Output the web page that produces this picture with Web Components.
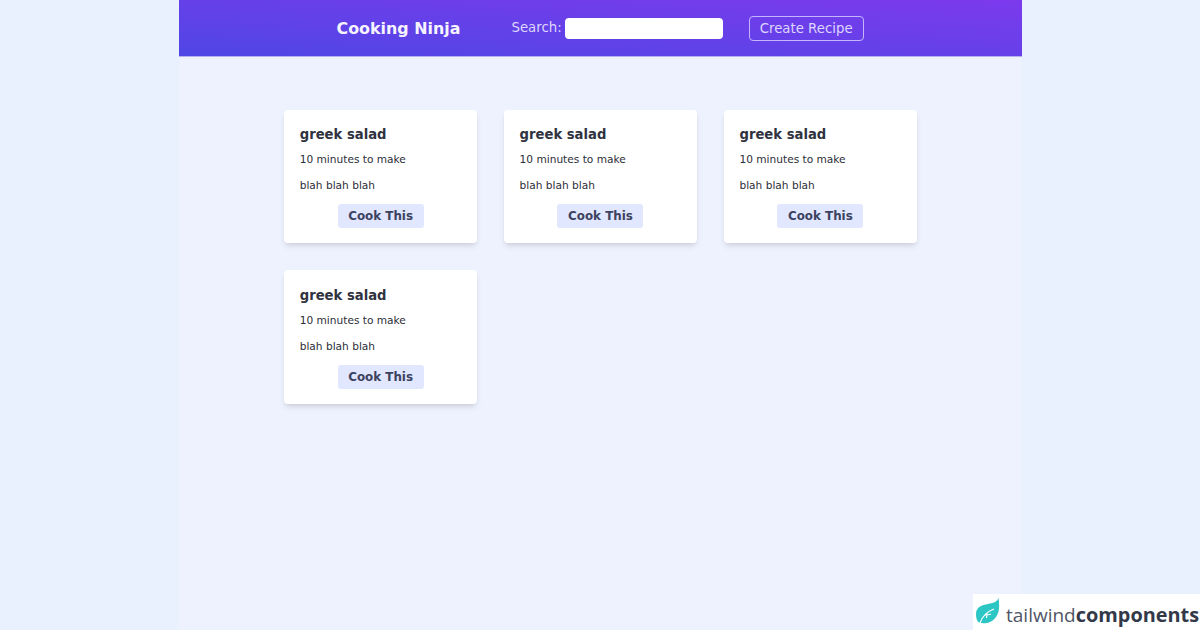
<!DOCTYPE html>
<html lang="en">
<head>
<meta charset="utf-8">
<title>Cooking Ninja</title>
<style>
  html, body { margin: 0; height: 100%; }
  body { background: #e8f1fd; font-family: "DejaVu Sans", sans-serif; overflow: hidden; }
</style>
</head>
<body>
<app-shell>
  <nav-bar slot="nav" brand="Cooking Ninja"></nav-bar>
  <recipe-card></recipe-card>
  <recipe-card></recipe-card>
  <recipe-card></recipe-card>
  <recipe-card></recipe-card>
</app-shell>
<tw-badge></tw-badge>
<script>
window.customElements.define('app-shell', class extends HTMLElement {
  constructor() {
    super()
    this.attachShadow({mode:"open"})
    this.shadowRoot.innerHTML = `
      <style>
        :host {
          display: block;
          width: 843px;
          height: 630px;
          margin: 0 auto;
          background: #eef2fe;
        }
        #grid {
          margin-left: 105.6px;
          padding-top: 52.7px;
          display: grid;
          grid-template-columns: repeat(3, 192.7px);
          column-gap: 27.2px;
          row-gap: 27.4px;
        }
      </style>
      <slot name="nav"></slot>
      <div id="grid"><slot></slot></div>
    `
  }
})

window.customElements.define('nav-bar', class extends HTMLElement {
  constructor() {
    super()
    this.attachShadow({mode:"open"})
    this.shadowRoot.innerHTML = `
      <style>
        :host {
          display: flex;
          align-items: center;
          height: 56px;
          padding-left: 158px;
          background: linear-gradient(to top right, #4f46e5, #7c3aed);
          border-bottom: 1px solid #b5aef0;
        }
        h1 { margin: 1px 51px 0 0; font-size: 15.9px; line-height: 24px; font-weight: 700; color: #f5f3ff; }
        label { color: #ddd6fe; font-size: 13.3px; display: flex; align-items: center; gap: 3px; margin-top: -2px; }
        input {
          width: 158px; height: 21px; box-sizing: border-box;
          border: 0; border-radius: 4px; background: #fff; padding: 0; margin-top: 3px;
        }
        button {
          margin-left: 26px; height: 25px; width: 115px; box-sizing: border-box;
          border: 1px solid #c4b5fd; border-radius: 4px; background: transparent;
          color: #ddd6fe; font: 13.3px "DejaVu Sans", sans-serif; padding: 0;
        }
      </style>
      <h1></h1>
      <label>Search: <input type="text"></label>
      <button type="button">Create Recipe</button>
    `
    this.shadowRoot.querySelector('h1').textContent = this.getAttribute('brand')
  }
})

window.customElements.define('recipe-card', class extends HTMLElement {
  constructor() {
    super()
    this.attachShadow({mode:"open"})
    this.shadowRoot.innerHTML = `
      <style>
        :host {
          display: flex;
          flex-direction: column;
          box-sizing: border-box;
          height: 133.3px;
          padding: 16.3px 16px 0 15.6px;
          background: #fff;
          border-radius: 4px;
          box-shadow: 0 4px 6px -1px rgba(0,0,0,.1), 0 2px 4px -2px rgba(0,0,0,.1);
        }
        h3 { margin: 0; font-size: 13.2px; line-height: 18px; font-weight: 700; color: #2f3240; }
        p { margin: 0; font-size: 10.6px; line-height: 16px; color: #2c2e38; }
        .time { margin-top: 7px; }
        .body { margin-top: 10px; }
        button {
          align-self: center; margin: 11px 0 0 .7px; height: 24px; width: 86px;
          border: 0; border-radius: 3px; background: #e0e7ff; color: #3d4260;
          font: 700 11.9px "DejaVu Sans", sans-serif; padding: 0;
        }
      </style>
      <h3>greek salad</h3>
      <p class="time">10 minutes to make</p>
      <p class="body">blah blah blah</p>
      <button type="button">Cook This</button>
    `
  }
})

window.customElements.define('tw-badge', class extends HTMLElement {
  constructor() {
    super()
    this.attachShadow({mode:"open"})
    this.shadowRoot.innerHTML = `
      <style>
        :host {
          position: fixed;
          right: 0; bottom: 0;
          width: 227px; height: 36px;
          background: #fff;
          display: flex;
          align-items: center;
          gap: 6px;
          padding-left: 3px;
          box-sizing: border-box;
          font: 19px "Open Sans", sans-serif;
          color: #4f5565;
          white-space: nowrap;
        }
        span { margin-top: 4px; }
        b { font-weight: 700; color: #333948; font-size: 19.9px; }
        svg { width: 24px; height: 26px; flex: none; margin-top: -3px; }
      </style>
      <svg viewBox="0 0 24 26">
        <path fill="#2cc6c4" d="M22.5 0C23 5 24.5 13 20 19C16 25 8 26.5 3 24.5C1 23.5 0 20 0 16C0 9 6 7 12 6C17 5 21 4 22.5 0Z"/>
        <path fill="none" stroke="#fff" stroke-width="1.2" d="M4 25C6 19 10 14 18 11M9 17C11 17 13 17 15 16M11 14.5L10.5 20"/>
      </svg>
      <span>tailwind<b>components</b></span>
    `
  }
})
</script>
</body>
</html>
